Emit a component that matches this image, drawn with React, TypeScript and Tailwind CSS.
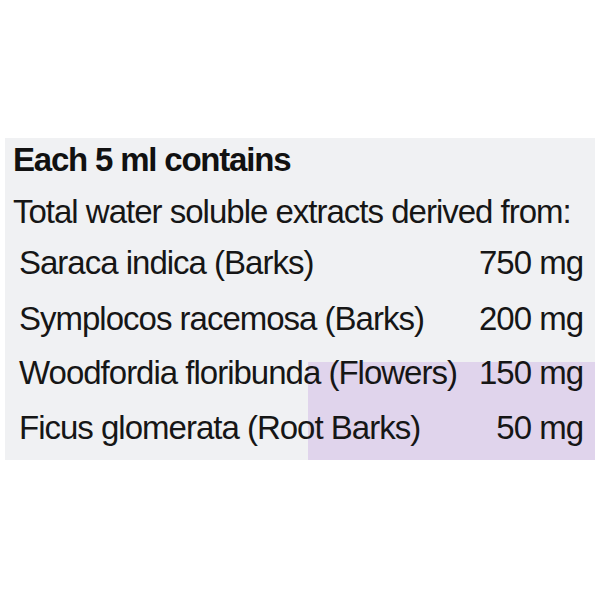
const rows = [
    { name: "Saraca indica (Barks)", dose: "750 mg", mt: "mt-[17px]" },
    { name: "Symplocos racemosa (Barks)", dose: "200 mg", mt: "mt-[22px]" },
];

const tinted = [
    { name: "Woodfordia floribunda (Flowers)", dose: "150 mg", mt: "-mt-[6px]" },
    { name: "Ficus glomerata (Root Barks)", dose: "50 mg", mt: "mt-[21px]" },
];

const IngredientRow = (props: { name: string; dose: string; mt: string }) => {
    return (
        <div className={`${props.mt} flex justify-between pl-[14px] pr-[12px] leading-[34px]`}>
            <span>{props.name}</span>
            <span>{props.dose}</span>
        </div>
    );
};

export default function App() {
    return (
        <div
            className="w-[600px] h-[600px] bg-white pt-[138px] px-[5px] text-[33px] tracking-[-1px] text-[#161616]"
            style={{ fontFamily: '"Liberation Sans", Arial, sans-serif' }}
        >
            <div className="h-[322px] bg-[#f0f1f3] flex flex-col">
                <div className="mt-[5px] pl-[8px] leading-[34px] font-bold tracking-[-1.2px] text-[#111]">
                    Each 5 ml contains
                </div>
                <div className="mt-[18px] pl-[8px] leading-[34px]">Total water soluble extracts derived from:</div>
                {rows.map((r) => (
                    <IngredientRow key={r.name} {...r} />
                ))}
                <div className="mt-[26px] flex-1 pb-[15px] bg-[linear-gradient(to_right,transparent_303px,#e0d4ec_303px)]">
                    {tinted.map((r) => (
                        <IngredientRow key={r.name} {...r} />
                    ))}
                </div>
            </div>
        </div>
    );
}
